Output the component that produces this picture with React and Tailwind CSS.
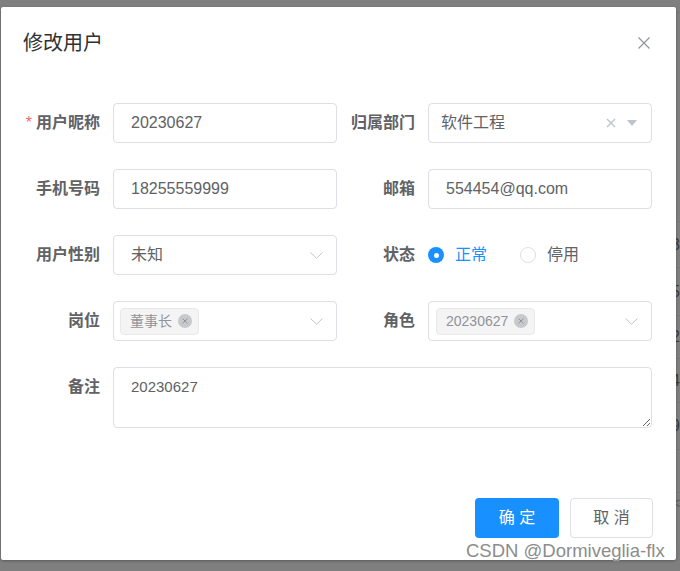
import React from 'react';

const font = "font-['Liberation_Sans','Noto_Sans_CJK_SC',sans-serif]";

const Chevron = () => (
  <svg width="13" height="7" viewBox="0 0 13 7" fill="none" className="ml-auto mr-[13px]">
    <path d="M0.5 0.5 L6.5 6.2 L12.5 0.5" stroke="#c0c4cc" strokeWidth="1" />
  </svg>
);

const TagClose = () => (
  <span className="ml-[6px] flex h-[14px] w-[14px] items-center justify-center rounded-full bg-[#c8c9cc]">
    <svg width="8" height="8" viewBox="0 0 8 8">
      <path d="M1.5 1.5 L6.5 6.5 M6.5 1.5 L1.5 6.5" stroke="#909399" strokeWidth="1" />
    </svg>
  </span>
);

const Tag = ({ text }) => (
  <span className="flex h-[27px] items-center rounded-[4px] border border-[#e9e9eb] bg-[#f4f4f5] pl-[9px] pr-[6px] text-[14px] text-[#909399]">
    {text}
    <TagClose />
  </span>
);

const Label = ({ children, required, wide }) => (
  <div className={`${wide ? 'w-[92px]' : 'w-[91px]'} flex h-[40px] shrink-0 items-center justify-end pr-[13px] text-[16px] font-bold text-[#606266]`}>
    {required && <span className="mr-[4px] font-normal text-[#f56c6c]">*</span>}
    {children}
  </div>
);

const Box = ({ children, pad = 'pl-[17px]' }) => (
  <div className={`flex h-[40px] w-[224px] items-center rounded-[4px] border border-[#dcdfe6] bg-white ${pad} text-[16px] text-[#606266]`}>
    {children}
  </div>
);

const Radio = ({ checked, text }) => (
  <div className="flex items-center">
    {checked ? (
      <span className="flex h-[16px] w-[16px] items-center justify-center rounded-full bg-[#1890ff]">
        <span className="h-[5px] w-[5px] rounded-full bg-white" />
      </span>
    ) : (
      <span className="h-[16px] w-[16px] rounded-full border border-[#dcdfe6] bg-white" />
    )}
    <span className={`ml-[11px] text-[16px] ${checked ? 'text-[#1890ff]' : 'text-[#606266]'}`}>{text}</span>
  </div>
);

const bgRows = [
  { h: 'h-[13px]', t: '' },
  { h: 'h-[209px]', t: '' },
  { h: 'h-[46px]', t: '3' },
  { h: 'h-[48px]', t: '5' },
  { h: 'h-[43px]', t: '2' },
  { h: 'h-[44px]', t: '4' },
  { h: 'h-[47px]', t: '9' },
  { h: 'h-[43px]', t: '' },
];

export default function App() {
  return (
    <div className={`relative h-[571px] w-[680px] overflow-hidden bg-[#7f7f7f] ${font}`}>
      {/* page behind the overlay */}
      <div className="flex flex-col">
        {bgRows.map((r, i) => (
          <div key={i} className={`${r.h} flex items-center border-b border-[#777777] pl-[671px] text-[16px] text-[#3c3c3c]`}>
            {r.t}
          </div>
        ))}
        <div className="flex h-[20px] items-center pl-[672px] text-[14px] text-[#5a5a5a]">&lt;</div>
      </div>

      {/* dialog */}
      <div className="absolute left-px top-[7px] flex h-[553px] w-[675px] flex-col rounded-[2px] bg-white shadow-[0_1px_3px_rgba(0,0,0,0.3)]">
        <div className="flex items-center justify-between pl-[22px] pr-[26px] pt-[24px]">
          <span className="text-[20px] leading-[24px] text-[#303133]">修改用户</span>
          <svg width="12" height="12" viewBox="0 0 12 12">
            <path d="M0.5 0.5 L11.5 11.5 M11.5 0.5 L0.5 11.5" stroke="#909399" strokeWidth="1.1" />
          </svg>
        </div>

        <div className="flex flex-col gap-[26px] pl-[20px] pt-[48px]">
          <div className="flex">
            <Label wide required>用户昵称</Label>
            <Box>20230627</Box>
            <Label>归属部门</Label>
            <Box pad="pl-[12px]">
              软件工程
              <svg width="10" height="10" viewBox="0 0 10 10" className="ml-auto">
                <path d="M1 1 L9 9 M9 1 L1 9" stroke="#c0c4cc" strokeWidth="1.4" />
              </svg>
              <svg width="10" height="6" viewBox="0 0 10 6" className="ml-[11px] mr-[14px]">
                <path d="M0 0 L10 0 L5 6 Z" fill="#c0c4cc" />
              </svg>
            </Box>
          </div>

          <div className="flex">
            <Label wide>手机号码</Label>
            <Box>18255559999</Box>
            <Label>邮箱</Label>
            <Box>554454@qq.com</Box>
          </div>

          <div className="flex">
            <Label wide>用户性别</Label>
            <Box>
              未知
              <Chevron />
            </Box>
            <Label>状态</Label>
            <div className="flex h-[40px] items-center gap-[33px]">
              <Radio checked text="正常" />
              <Radio text="停用" />
            </div>
          </div>

          <div className="flex">
            <Label wide>岗位</Label>
            <Box pad="pl-[6px]">
              <Tag text="董事长" />
              <Chevron />
            </Box>
            <Label>角色</Label>
            <Box pad="pl-[7px]">
              <Tag text="20230627" />
              <Chevron />
            </Box>
          </div>

          <div className="flex">
            <Label wide>备注</Label>
            <textarea
              readOnly
              value="20230627"
              className="h-[61px] w-[539px] rounded-[4px] border border-[#dcdfe6] px-[17px] pt-[9px] font-['Liberation_Sans',sans-serif] text-[15px] leading-[20px] text-[#606266] outline-none"
            />
          </div>
        </div>

        <div className="mt-auto flex justify-end gap-[11px] pb-[22px] pr-[23px]">
          <button className="h-[40px] w-[84px] rounded-[4px] bg-[#1890ff] text-[16px] text-white">确 定</button>
          <button className="h-[40px] w-[83px] rounded-[4px] border border-[#dcdfe6] bg-white text-[16px] text-[#606266]">取 消</button>
        </div>
      </div>

      <div className="absolute left-[466px] top-[542px] text-[18.5px] leading-none text-[#8c8c8c] [text-shadow:0_0_1px_#ffffff]">
        CSDN @Dormiveglia-flx
      </div>
    </div>
  );
}
